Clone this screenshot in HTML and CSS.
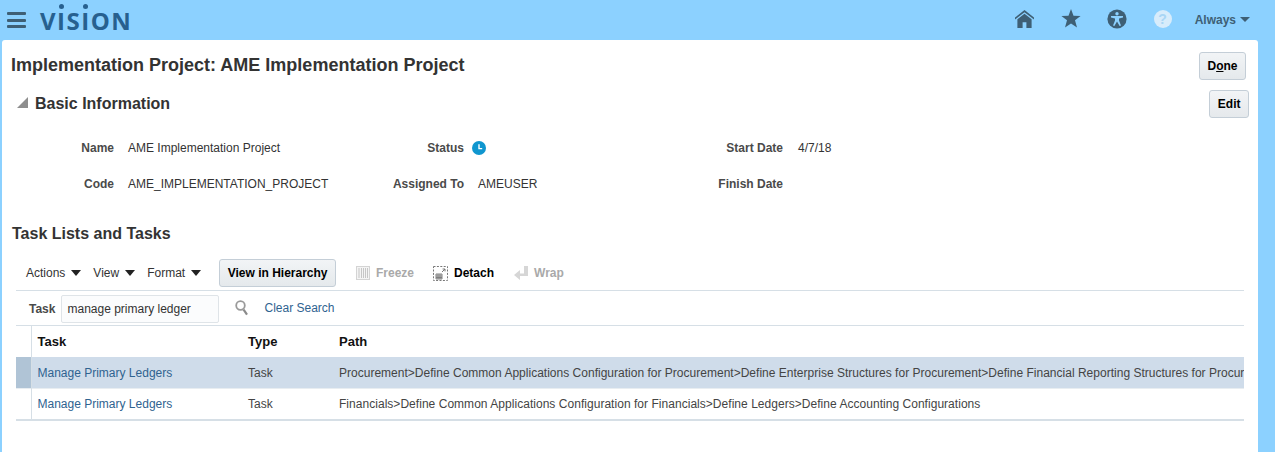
FILE: index.html
```html
<!DOCTYPE html>
<html>
  <head>
    <meta charset="utf-8" />
    <title>Implementation Project</title>
    <link rel="stylesheet" href="styles.css">
  </head>

  <body>
    <header class="topbar">
      <div class="hamburger"><span></span><span></span><span></span></div>
      <div class="logo">V<span class="logo-i">I</span>S<span class="logo-i">I</span>ON</div>
      <nav class="topnav">
        <svg class="nav-home" width="19" height="18" viewBox="0 0 20 19">
          <path d="M10 0 L20 8 L20 10 L10 2.4 L0 10 L0 8 Z" fill="#3e5f75"/>
          <path d="M10 4 L17.5 9.8 L17.5 19 L12 19 L12 13 L8 13 L8 19 L2.5 19 L2.5 9.8 Z" fill="#3e5f75"/>
        </svg>
        <svg class="nav-star" width="20" height="19" viewBox="0 0 20 19">
          <path d="M10 0 L12.5 6.8 L19.6 6.9 L14 11.3 L16 18.6 L10 14.4 L4 18.6 L6 11.3 L0.4 6.9 L7.5 6.8 Z" fill="#3e5f75"/>
        </svg>
        <svg class="nav-access" width="20" height="20" viewBox="0 0 20 20">
          <circle cx="10" cy="10" r="9.6" fill="#3e5f75"/>
          <circle cx="10" cy="4.8" r="1.7" fill="#8cd1ff"/>
          <path d="M4 7 L16 7 L16 8.4 L12 9.4 L12 11.5 L14 16.4 L12.6 17 L10 12.6 L7.4 17 L6 16.4 L8 11.5 L8 9.4 L4 8.4 Z" fill="#8cd1ff"/>
        </svg>
        <div class="nav-help">?</div>
        <div class="nav-user">Always<span class="caret"></span></div>
      </nav>
    </header>

    <main class="panel">
      <div class="title-row">
        <h1>Implementation Project: AME Implementation Project</h1>
        <button class="btn">D<u>o</u>ne</button>
      </div>

      <div class="section-row">
        <div class="disclosure"></div>
        <h2>Basic Information</h2>
        <button class="btn btn-edit">Edit</button>
      </div>

      <div class="info-grid">
        <div class="label">Name</div>
        <div class="value">AME Implementation Project</div>
        <div class="label">Status</div>
        <div class="value value-status">
          <svg width="14" height="14" viewBox="0 0 14 14">
            <circle cx="7" cy="7" r="7" fill="#0f96cf"/>
            <path d="M7 3.2 L7 7.6 L10.2 7.6" fill="none" stroke="#fff" stroke-width="1.4"/>
          </svg>
        </div>
        <div class="label">Start Date</div>
        <div class="value value-date">4/7/18</div>

        <div class="label">Code</div>
        <div class="value">AME_IMPLEMENTATION_PROJECT</div>
        <div class="label">Assigned To</div>
        <div class="value">AMEUSER</div>
        <div class="label">Finish Date</div>
        <div class="value value-date"></div>
      </div>

      <h2 class="tasks-heading">Task Lists and Tasks</h2>

      <div class="table-box">
        <div class="toolbar">
          <div class="menu">Actions<span class="menu-caret"></span></div>
          <div class="menu">View<span class="menu-caret"></span></div>
          <div class="menu">Format<span class="menu-caret"></span></div>
          <button class="btn btn-hierarchy">View in Hierarchy</button>
          <div class="tool tool-off tool-freeze">
            <svg width="14" height="14" viewBox="0 0 14 14">
              <rect x="0.5" y="0.5" width="13" height="13" fill="#f4f4f4" stroke="#d4d4d4"/>
              <path d="M3 2 V12 M5.5 2 V12 M7.5 2 V12 M9.5 2 V12 M11.5 2 V12" stroke="#c6c6c6" stroke-width="1"/>
            </svg>
            Freeze
          </div>
          <div class="tool tool-detach">
            <svg width="15" height="15" viewBox="0 0 15 15">
              <rect x="0.5" y="0.5" width="14" height="14" fill="none" stroke="#777" stroke-dasharray="2 1.4"/>
              <path d="M3 8 H9 V13 H3 Z M3 10 H9 M3 11.6 H9 M5 8 V13 M7 8 V13" fill="none" stroke="#666" stroke-width="0.8"/>
              <path d="M9 6 L12 3 M9.6 3 H12 V5.4" fill="none" stroke="#777" stroke-width="1"/>
            </svg>
            Detach
          </div>
          <div class="tool tool-off tool-wrap">
            <svg width="14" height="14" viewBox="0 0 14 14">
              <path d="M10 0 H14 V10 H6 V14 L0 9 L6 4 V7.5 H10 Z" fill="#d6d6d6"/>
            </svg>
            Wrap
          </div>
        </div>

        <div class="searchbar">
          <label class="search-label">Task</label>
          <div class="search-input">manage primary ledger</div>
          <svg class="search-icon" width="14" height="16" viewBox="0 0 14 16">
            <circle cx="5.5" cy="5.5" r="4.3" fill="none" stroke="#9a9a9a" stroke-width="1.8"/>
            <path d="M8.6 9.6 L12 14.6" stroke="#8a8a8a" stroke-width="2.2"/>
          </svg>
          <a class="link clear-search">Clear Search</a>
        </div>

        <table class="results">
          <colgroup>
            <col class="col-select"><col class="col-task"><col class="col-type"><col>
          </colgroup>
          <thead>
            <tr>
              <th></th>
              <th>Task</th>
              <th>Type</th>
              <th>Path</th>
            </tr>
          </thead>
          <tbody>
            <tr class="is-selected">
              <td class="select-cell"></td>
              <td><a class="link">Manage Primary Ledgers</a></td>
              <td>Task</td>
              <td class="path-cell">Procurement&gt;Define Common Applications Configuration for Procurement&gt;Define Enterprise Structures for Procurement&gt;Define Financial Reporting Structures for Procurement</td>
            </tr>
            <tr>
              <td class="select-cell"></td>
              <td><a class="link">Manage Primary Ledgers</a></td>
              <td>Task</td>
              <td class="path-cell">Financials&gt;Define Common Applications Configuration for Financials&gt;Define Ledgers&gt;Define Accounting Configurations</td>
            </tr>
          </tbody>
        </table>
      </div>
    </main>
  </body>
</html>
```

FILE: styles.css
```css
:root {
  --color-bg: #8cd1ff;
  --color-nav: #3e5f75;
  --color-logo: #27608f;
  --color-line: #d6dfe6;
  --color-link: #2f6390;
  --color-text: #333333;
  --color-selected: #cfdcea;
}

* {
  box-sizing: border-box;
}

html,
body {
  height: 100%;
}

body {
  margin: 0;
  display: flex;
  flex-direction: column;
  overflow: hidden;
  background-color: var(--color-bg);
  font-family: 'Liberation Sans', Arial, sans-serif;
  font-size: 12px;
  color: var(--color-text);
}

/* top bar */

.topbar {
  height: 40px;
  flex: none;
  display: flex;
  align-items: center;
  padding: 0 25px 0 7px;
}

.hamburger {
  width: 19px;
  display: flex;
  flex-direction: column;
  gap: 3.5px;
  margin-right: 14px;
}

.hamburger span {
  height: 3px;
  border-radius: 1px;
  background-color: var(--color-nav);
}

.logo {
  font-family: 'Open Sans', sans-serif;
  font-weight: 700;
  font-size: 24px;
  line-height: 24px;
  letter-spacing: 1.5px;
  color: var(--color-logo);
  margin-top: 2px;
}

.logo-i {
  position: relative;
}

.logo-i::before {
  content: '';
  position: absolute;
  top: 0;
  left: 50%;
  width: 5px;
  height: 5px;
  margin-left: -3px;
  border-radius: 50%;
  background-color: var(--color-logo);
}

.topnav {
  margin-left: auto;
  display: flex;
  align-items: center;
  height: 100%;
  padding-bottom: 3px;
}

.nav-star {
  margin-left: 27px;
}

.nav-access {
  margin-left: 26px;
}

.nav-help {
  width: 18px;
  height: 18px;
  margin-left: 27px;
  border-radius: 50%;
  background-color: #d7ecfb;
  color: #a9d6f5;
  font-weight: 700;
  font-size: 14px;
  line-height: 18px;
  text-align: center;
}

.nav-user {
  margin-left: 23px;
  margin-top: 2px;
  display: flex;
  align-items: center;
  font-weight: 700;
  color: var(--color-nav);
}

.caret {
  width: 0;
  height: 0;
  margin-left: 4px;
  border-left: 5px solid transparent;
  border-right: 5px solid transparent;
  border-top: 5px solid var(--color-nav);
}

/* page panel */

.panel {
  flex: 1;
  margin: 0 17px 0 2px;
  background-color: #ffffff;
  border-radius: 3px 3px 0 0;
  display: flex;
  flex-direction: column;
}

.title-row {
  display: flex;
  justify-content: space-between;
  align-items: flex-start;
  padding: 12px 12px 0 9px;
}

h1 {
  margin: 2px 0 0;
  font-size: 18px;
  line-height: 22px;
  color: #333333;
}

h2 {
  margin: 0;
  font-size: 16px;
  line-height: 18px;
  color: #333333;
}

.btn {
  height: 28px;
  padding: 0 7.5px;
  border: 1px solid #c4ced7;
  border-radius: 3px;
  background: linear-gradient(#f2f4f6, #e5e9ec);
  font-family: inherit;
  font-size: 12px;
  font-weight: 700;
  color: #000000;
}

.section-row {
  display: flex;
  align-items: center;
  margin-top: 10px;
  padding: 0 9px 0 15px;
}

.section-row h2 {
  align-self: flex-start;
  padding-top: 5px;
}

.disclosure {
  width: 0;
  height: 0;
  margin: 0 7px 4px 0;
  border-left: 11px solid transparent;
  border-bottom: 11px solid #8e8e8e;
}

.btn-edit {
  margin-left: auto;
}

.info-grid {
  display: grid;
  grid-template-columns: 112px 230px 120px 239px 80px 1fr;
  grid-auto-rows: 36px;
  margin-top: 12px;
  align-items: center;
}

.label {
  text-align: right;
  font-weight: 700;
  color: #4a4a4a;
}

.value {
  padding-left: 14px;
  display: flex;
  align-items: center;
}

.value-status {
  padding-left: 8px;
}

.value-date {
  padding-left: 15px;
}

.tasks-heading {
  margin: 23px 0 0 10px;
}

/* table area */

.table-box {
  margin: 15px 14px 0 14px;
}

.toolbar {
  height: 33px;
  display: flex;
  align-items: center;
  padding: 0 0 2px 10px;
  border-bottom: 1px solid var(--color-line);
}

.menu {
  display: flex;
  align-items: center;
  margin-right: 12px;
  color: #333333;
}

.menu-caret {
  width: 0;
  height: 0;
  margin-left: 6px;
  border-left: 5px solid transparent;
  border-right: 5px solid transparent;
  border-top: 6px solid #222222;
}

.btn-hierarchy {
  margin-left: 6px;
}

.tool {
  display: flex;
  align-items: center;
  gap: 6px;
  font-weight: 700;
  color: #000000;
}

.tool-off {
  color: #a9a9a9;
}

.tool-freeze {
  margin-left: 20px;
}

.tool-detach {
  margin-left: 19px;
}

.tool-wrap {
  margin-left: 20px;
}

.searchbar {
  height: 35px;
  display: flex;
  align-items: center;
  padding: 1px 0 0 13px;
  border-bottom: 1px solid var(--color-line);
}

.search-label {
  font-weight: 700;
  color: #4a4a4a;
}

.search-input {
  width: 158px;
  height: 28px;
  margin-left: 6px;
  padding-left: 5px;
  border: 1px solid #dfe4e8;
  border-radius: 2px;
  background-color: #fbfcfd;
  line-height: 27px;
  color: #333333;
}

.search-icon {
  margin-left: 16px;
  margin-bottom: 1px;
}

.link {
  color: var(--color-link);
}

.clear-search {
  margin-left: 15px;
  margin-bottom: 2px;
}

.results {
  width: 100%;
  table-layout: fixed;
  border-collapse: collapse;
  border-bottom: 2px solid var(--color-line);
}

.col-select {
  width: 15px;
}

.col-task {
  width: 211px;
}

.col-type {
  width: 91px;
}

.results th {
  height: 31px;
  padding: 0 6px;
  text-align: left;
  font-size: 13px;
  font-weight: 700;
  color: #111111;
}

.results th:first-child {
  border-right: 1px solid var(--color-line);
}

.results td {
  height: 32px;
  padding: 0 6px;
  white-space: nowrap;
  overflow: hidden;
  color: #444444;
  border-top: 1px solid #e8edf1;
}

.results .select-cell {
  border-right: 1px solid var(--color-line);
}

.path-cell {
  letter-spacing: 0.035px;
}

.is-selected td {
  height: 31px;
  padding-top: 1px;
  border-top: 0;
  background-color: var(--color-selected);
}

.is-selected .path-cell {
  letter-spacing: 0.012px;
}

.is-selected .select-cell {
  background-color: #b0c4d6;
}
```
